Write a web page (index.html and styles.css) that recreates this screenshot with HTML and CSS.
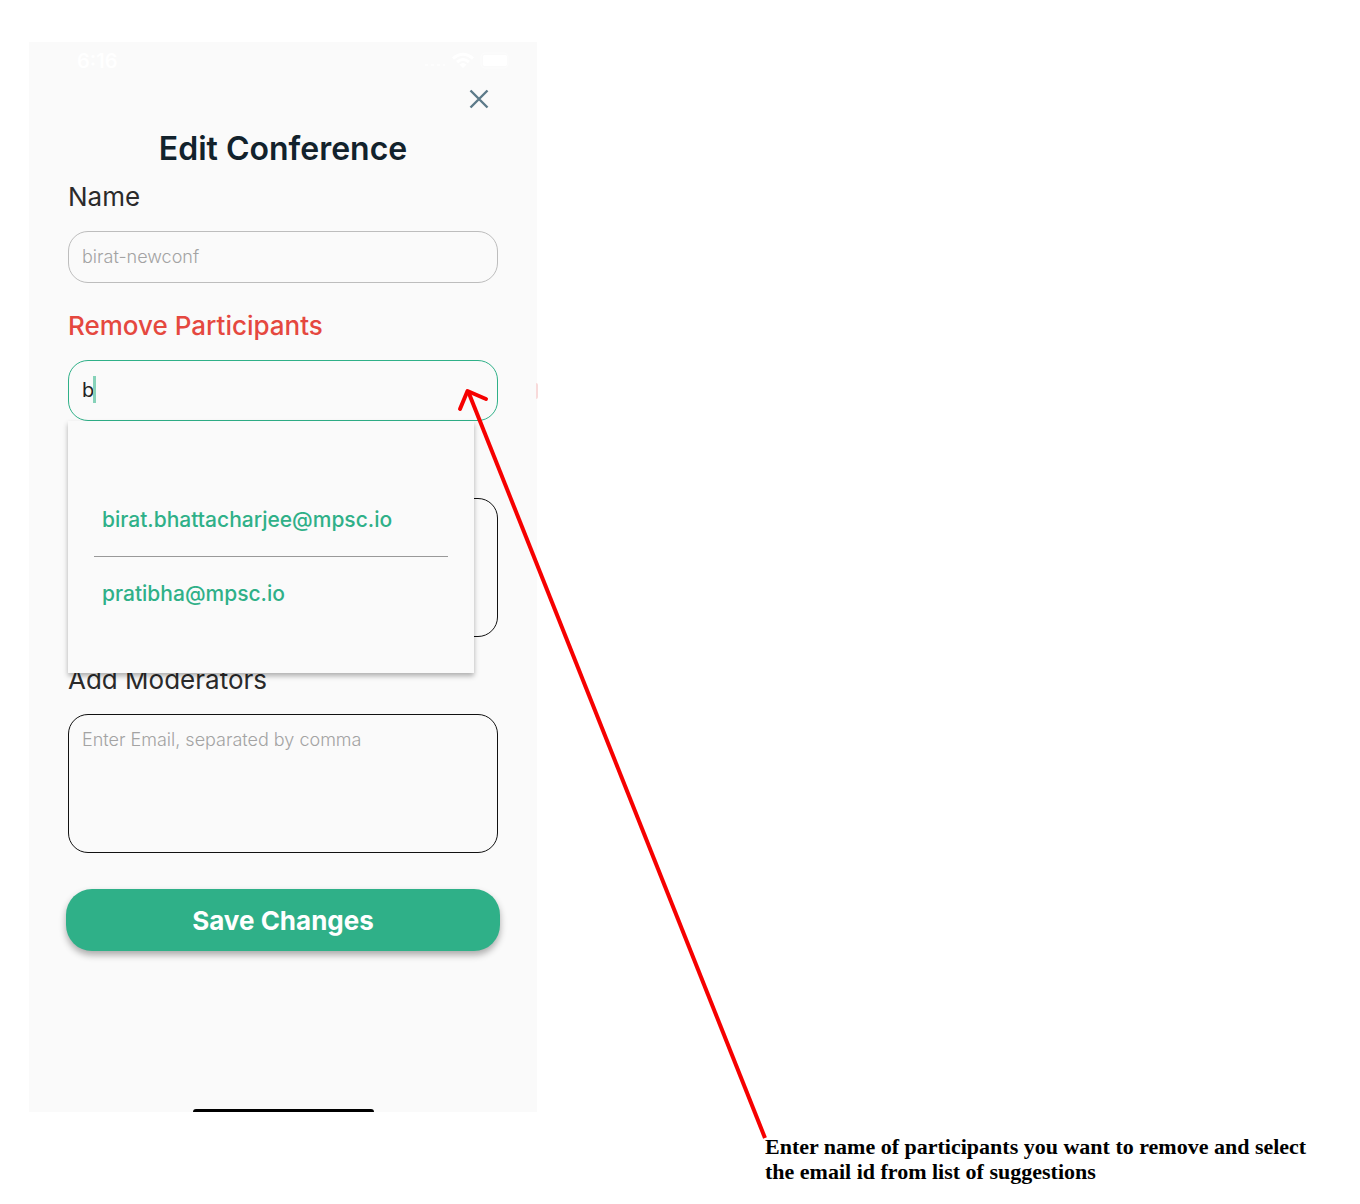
FILE: index.html
```html
<!DOCTYPE html>
<html lang="en">
<head>
<meta charset="utf-8">
<meta name="viewport" content="width=device-width, initial-scale=1">
<title>Edit Conference</title>
<link rel="stylesheet" href="styles.css">
</head>
<body>
<main class="guide">
  <section class="phone">
    <div class="status">
      <span>6:16</span>
      <svg class="status-icons" width="84" height="20" viewBox="0 0 84 20" fill="none" stroke="#fff" aria-hidden="true">
        <path d="M0 14h20" stroke-width="2" stroke-dasharray="3 3" opacity=".5"/>
        <path d="M28 7.500Q38 -1 48 7.500M32 11Q38 6 44 11" stroke-width="3"/>
        <path d="M34.500 13.500Q38 10.500 41.500 13.500L38 17z" fill="#fff" stroke="none"/>
        <rect x="56" y="2" width="27" height="15" rx="4" opacity=".4"/>
        <rect x="58" y="4" width="24" height="11" rx="2" fill="#fff" stroke="none"/>
      </svg>
    </div>
    <form class="form">
      <button class="close" type="button" aria-label="Close">
        <svg width="20" height="20" viewBox="0 0 20 20" fill="none" stroke="#5c7a89" stroke-width="2.400" aria-hidden="true"><path d="M1.500 1.500l17 17M18.500 1.500l-17 17"/></svg>
      </button>
      <h1 class="title">Edit Conference</h1>
      <div class="fields">
        <div class="field">
          <label for="name">Name</label>
          <input class="box box-name" id="name" type="text" placeholder="birat-newconf">
        </div>
        <div class="field field-remove">
          <label for="remove">Remove Participants</label>
          <div class="combo">
            <input class="box box-active" id="remove" type="text" value="b" autocomplete="off">
            <span class="caret"></span>
            <ul class="suggestions">
              <li><button type="button">birat.bhattacharjee@mpsc.io</button></li>
              <li><button type="button">pratibha@mpsc.io</button></li>
            </ul>
          </div>
        </div>
        <div class="field">
          <label for="participants">Add Participants</label>
          <textarea class="box box-area" id="participants"></textarea>
        </div>
        <div class="field">
          <label for="moderators">Add Moderators</label>
          <textarea class="box box-area" id="moderators" placeholder="Enter Email, separated by comma"></textarea>
        </div>
      </div>
      <button class="save" type="submit">Save Changes</button>
    </form>
    <div class="home-bar"></div>
    <span class="edge-mark"></span>
  </section>
  <p class="caption">Enter name of participants you want to remove and select the email id from list of suggestions</p>
  <svg class="arrow" width="780" height="1150" viewBox="0 0 780 1150" fill="none" stroke="#f60000" stroke-width="4" aria-hidden="true">
    <path d="M468 391L765 1138"/>
    <path d="M460 409L467.500 391L486 399" stroke-linecap="round" stroke-linejoin="round"/>
  </svg>
</main>
</body>
</html>
```
FILE: styles.css
```css
* {
  box-sizing: border-box;
}

body {
  margin: 0;
  background: #fff;
  font-family: Inter, "Liberation Sans", sans-serif;
}

.guide {
  position: relative;
  display: grid;
  grid-template-columns: minmax(0, 508px) minmax(0, 1fr);
  gap: 22px 228px;
  padding: 42px 29px 20px;
}

.phone {
  position: relative;
  display: flex;
  flex-direction: column;
  background: #fafafa;
}

.status {
  display: flex;
  justify-content: space-between;
  align-items: center;
  height: 38px;
  padding: 0 28px 0 48px;
  color: #fff;
  font-size: 20px;
  font-weight: 600;
}

.form {
  display: flex;
  flex-direction: column;
  padding: 0 39px;
}

button {
  border: 0;
  padding: 0;
  background: none;
  font: inherit;
}

.close {
  display: flex;
  align-self: flex-end;
  align-items: center;
  justify-content: center;
  width: 38px;
  height: 38px;
}

.title {
  margin: 11px 0 12px;
  color: #12222c;
  font-size: 32px;
  font-weight: 600;
  line-height: 40px;
  text-align: center;
}

.fields {
  display: flex;
  flex-direction: column;
  gap: 27px;
}

.field {
  display: flex;
  flex-direction: column;
  gap: 18px;
  color: #2b2b2b;
  font-size: 26px;
  line-height: 32px;
}

.field-remove {
  color: #e5483f;
  font-weight: 500;
}

.box {
  display: block;
  width: 100%;
  margin: 0;
  border: 1px solid #111;
  border-radius: 20px;
  padding: 0 13px;
  background: transparent;
  color: #222;
  font: 300 18px/24px Inter, "Liberation Sans", sans-serif;
  outline: 0;
  resize: none;
}

.box::placeholder {
  color: #a3a3a3;
  opacity: 1;
}

.box-name {
  height: 52px;
  border-color: #bdbdbd;
  padding-bottom: 2px;
}

.box-active {
  height: 61px;
  border-color: #2fb088;
  padding-bottom: 2px;
  font-size: 20px;
  font-weight: 400;
}

.box-area {
  height: 139px;
  padding-top: 13px;
}

.combo {
  position: relative;
}

.caret {
  position: absolute;
  top: 16px;
  left: 25px;
  width: 3px;
  height: 27px;
  background: #86d2b9;
}

.suggestions {
  position: absolute;
  top: 100%;
  left: 0;
  z-index: 1;
  width: 406px;
  height: 252px;
  margin: 0;
  padding: 62px 26px 0;
  background: #fafafa;
  box-shadow: 0 3px 5px rgba(0, 0, 0, 0.3);
  list-style: none;
}

.suggestions li + li {
  border-top: 1px solid #999;
}

.suggestions button {
  width: 100%;
  height: 73px;
  padding: 0 8px;
  color: #2fb088;
  font-size: 21px;
  font-weight: 500;
  text-align: left;
}

.save {
  height: 62px;
  margin: 36px -2px 0;
  border-radius: 26px;
  background: #2fb088;
  box-shadow: 0 4px 7px rgba(0, 0, 0, 0.32);
  color: #fff;
  font-size: 26px;
  font-weight: 700;
}

.home-bar {
  width: 181px;
  height: 3px;
  margin: 158px auto 0;
  border-radius: 3px 3px 0 0;
  background: #000;
}

.edge-mark {
  position: absolute;
  top: 341px;
  right: -1px;
  width: 2px;
  height: 16px;
  border-radius: 0 2px 2px 0;
  background: #f8dada;
}

.caption {
  grid-row: 2;
  grid-column: 2;
  margin: 0;
  font: bold 22px/25px "Liberation Serif", serif;
}

.arrow {
  position: absolute;
  top: 0;
  left: 0;
  z-index: 2;
  pointer-events: none;
}
```
